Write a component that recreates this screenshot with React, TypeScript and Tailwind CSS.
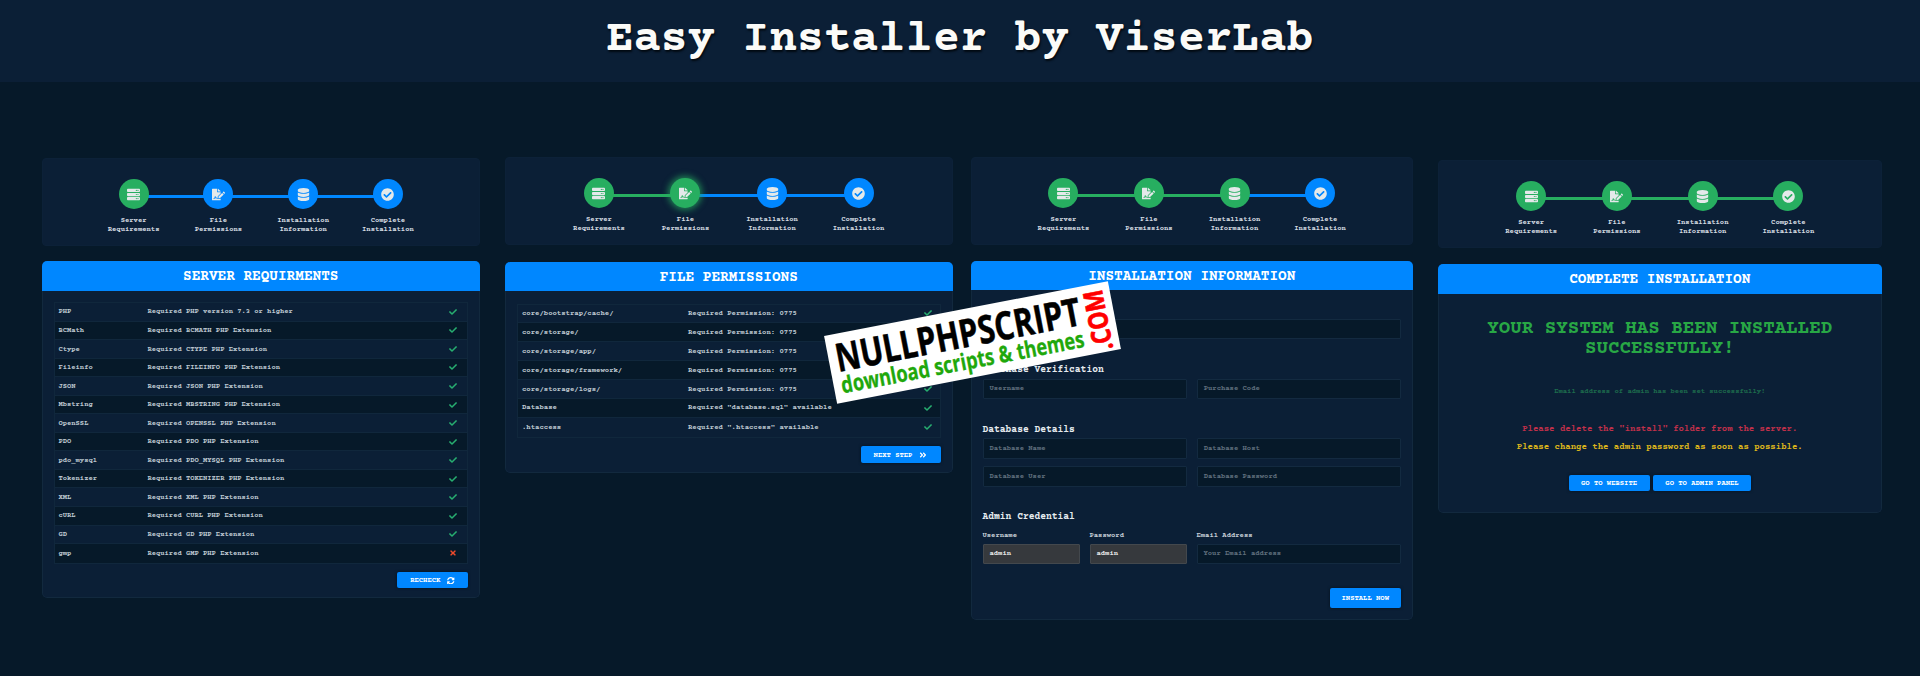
import type { ReactNode } from "react";
import { FaServer, FaFileSignature, FaDatabase, FaCheckCircle, FaCheck, FaTimes, FaSyncAlt, FaAngleDoubleRight } from "react-icons/fa";

const steps = [
  { icon: FaServer, a: "Server", b: "Requirements" },
  { icon: FaFileSignature, a: "File", b: "Permissions" },
  { icon: FaDatabase, a: "Installation", b: "Information" },
  { icon: FaCheckCircle, a: "Complete", b: "Installation" },
];

function Stepper({ done, glow }: { done: number; glow?: number }) {
  return (
    <div className="flex h-[87.5px] justify-center rounded-[4px] border border-[#0c2138] bg-[#0b1f36] pt-[20px]">
      {steps.map(({ icon: Icon, a, b }, i) => (
        <div key={b} className="relative flex w-[19.42%] shrink-0 flex-col items-center">
          {i < 3 && (
            <div
              className={`absolute left-1/2 top-[15.5px] h-[3px] w-full ${i < done - 1 ? "bg-[#27ae60]" : "bg-[#0087ff]"}`}
            />
          )}
          <div
            className={`relative flex size-[30px] items-center justify-center rounded-full text-[13px] text-[#e4e9ea] ${
              i < done ? "bg-[#27ae60]" : "bg-[#0087ff]"
            } ${i === glow ? "shadow-[0_0_6px_2px_#27ae60b0]" : ""}`}
          >
            <Icon />
          </div>
          <div className="mt-[7px] whitespace-nowrap text-center text-[7.2px] leading-[9.3px] text-[#d3dae0]">
            {a}
            <br />
            {b}
          </div>
        </div>
      ))}
    </div>
  );
}

function Card({ title, className, children }: { title: string; className: string; children: ReactNode }) {
  return (
    <div className={`flex flex-col overflow-hidden rounded-[5px] bg-[#0b1f36] ${className}`}>
      <div className="flex h-[29.5px] shrink-0 items-center justify-center bg-[#0087ff] pt-[4.5px] text-[14.4px] text-white">
        {title}
      </div>
      <div className="flex-1 rounded-b-[5px] border border-t-0 border-[#12293e] px-[11px]">{children}</div>
    </div>
  );
}

function Button({ className, children }: { className: string; children: ReactNode }) {
  return (
    <button
      className={`flex items-center justify-center rounded-[2px] bg-[#0087ff] pt-[1px] text-[7.2px] font-bold text-white shadow-[0_0_3px_#04101c] ${className}`}
    >
      {children}
    </button>
  );
}

function Table({ rows, cols, fails }: { rows: string[][]; cols: string; fails?: string }) {
  return (
    <div className="border border-[#10273c] text-[#bcc6cf]">
      {rows.map(([name, text]) => (
        <div
          key={name}
          className={`grid items-center whitespace-nowrap pl-[4px] even:bg-[#061929] ${cols} border-b border-[#10273c] last:border-b-0`}
        >
          <span>{name}</span>
          <span>{text}</span>
          {name === fails ? <FaTimes className="text-[8px] text-[#ee4a2b]" /> : <FaCheck className="text-[8px] text-[#27ae70]" />}
        </div>
      ))}
    </div>
  );
}

const extensions = [
  ["PHP", "Required PHP version 7.3 or higher"],
  ["BCMath", "Required BCMATH PHP Extension"],
  ["Ctype", "Required CTYPE PHP Extension"],
  ["Fileinfo", "Required FILEINFO PHP Extension"],
  ["JSON", "Required JSON PHP Extension"],
  ["Mbstring", "Required MBSTRING PHP Extension"],
  ["OpenSSL", "Required OPENSSL PHP Extension"],
  ["PDO", "Required PDO PHP Extension"],
  ["pdo_mysql", "Required PDO_MYSQL PHP Extension"],
  ["Tokenizer", "Required TOKENIZER PHP Extension"],
  ["XML", "Required XML PHP Extension"],
  ["cURL", "Required CURL PHP Extension"],
  ["GD", "Required GD PHP Extension"],
  ["gmp", "Required GMP PHP Extension"],
];

const permissions = [
  ["core/bootstrap/cache/", "Required Permission: 0775"],
  ["core/storage/", "Required Permission: 0775"],
  ["core/storage/app/", "Required Permission: 0775"],
  ["core/storage/framework/", "Required Permission: 0775"],
  ["core/storage/logs/", "Required Permission: 0775"],
  ["Database", 'Required "database.sql" available'],
  [".htaccess", 'Required ".htaccess" available'],
];

function Field({ label, disabled, text }: { label?: string; disabled?: boolean; text?: string }) {
  return (
    <div className="text-[7.2px]">
      {label && <div className="h-[13px] leading-[9px] text-[#c3ccd4]">{label}</div>}
      <div
        className={`flex h-[20.5px] items-center rounded-[1px] border pl-[6px] ${
          disabled ? "border-[#43484d] bg-[#36393d] text-[#e5e5e5]" : "border-[#132a40] bg-[#061929] text-[#5f6e7c]"
        }`}
      >
        {text}
      </div>
    </div>
  );
}

function Heading({ className, children }: { className: string; children?: ReactNode }) {
  return <h3 className={`text-[9.65px] leading-[12px] text-[#e6ebef] ${className}`}>{children}</h3>;
}

function Stamp() {
  return (
    <div className="absolute left-[828px] top-[308px] -rotate-[10.9deg]">
      <svg width="289" height="69" viewBox="0 0 289 69" className="block overflow-visible" fontFamily="'Open Sans', sans-serif">
        <rect width="289" height="69" fill="#fff" />
        <text x="7" y="38" fontSize="39" fontWeight="700" fill="#000" stroke="#000" strokeWidth="0.5" textLength="249" lengthAdjust="spacingAndGlyphs">
          NULLPHPSCRIPT
        </text>
        <text x="7.5" y="60" fontSize="23" fontWeight="700" fill="#1fa80c" stroke="#1fa80c" strokeWidth="0.3" textLength="247" lengthAdjust="spacingAndGlyphs">
          download scripts &amp; themes
        </text>
        <text
          transform="translate(281.5 67) rotate(-90)"
          fontSize="27"
          fontWeight="700"
          fill="#f00"
          stroke="#f00"
          strokeWidth="0.7"
          textLength="61"
          lengthAdjust="spacingAndGlyphs"
        >
          .COM
        </text>
      </svg>
    </div>
  );
}

export default function App() {
  return (
    <div className="relative h-[676px] w-[1920px] overflow-hidden bg-[#061929] font-['Courier_Prime','Courier_10_Pitch','Liberation_Mono',monospace] font-bold">
      <header className="flex h-[82px] items-start justify-center bg-[#0b1f36] pt-[15px]">
        <h1 className="text-[45.4px] leading-[52px] text-[#fbfbf8] [text-shadow:1px_2px_2px_#020a12]">Easy Installer by ViserLab</h1>
      </header>

      <main className="flex items-start pl-[41.5px]">
        <section className="mt-[76px] w-[438.5px]">
          <Stepper done={1} />
          <Card title="SERVER REQUIRMENTS" className="mt-[15.5px] h-[337px]">
            <div className="pt-[11.5px] text-[7.13px]">
              <Table rows={extensions} cols="h-[18.56px] grid-cols-[89px_301px_auto]" fails="gmp" />
            </div>
            <Button className="ml-auto mt-[8px] h-[16.5px] w-[71px] gap-[7px]">
              RECHECK <FaSyncAlt className="text-[7.5px]" />
            </Button>
          </Card>
        </section>

        <section className="ml-[25px] mt-[75px] w-[447.5px]">
          <Stepper done={2} glow={1} />
          <Card title="FILE PERMISSIONS" className="mt-[17px] h-[211px]">
            <div className="pt-[12.5px] text-[7.27px]">
              <Table rows={permissions} cols="h-[18.9px] grid-cols-[166px_235.5px_auto]" />
            </div>
            <Button className="ml-auto mt-[8.5px] h-[16.5px] w-[80px] gap-[7px]">
              NEXT STEP <FaAngleDoubleRight className="text-[8px]" />
            </Button>
          </Card>
        </section>

        <section className="ml-[18px] mt-[75px] w-[442.5px]">
          <Stepper done={3} />
          <Card title="INSTALLATION INFORMATION" className="mt-[16px] h-[359.5px]">
            <div className="pt-[28.5px]">
              <Field />
            </div>
            <Heading className="mt-[25px]">Purchase Verification</Heading>
            <div className="mt-[2.5px] grid grid-cols-2 gap-x-[10px]">
              <Field text="Username" />
              <Field text="Purchase Code" />
            </div>
            <Heading className="mt-[24.5px]">Database Details</Heading>
            <div className="mt-[2.5px] grid grid-cols-2 gap-x-[10px] gap-y-[7.5px]">
              <Field text="Database Name" />
              <Field text="Database Host" />
              <Field text="Database User" />
              <Field text="Database Password" />
            </div>
            <Heading className="mt-[24.5px]">Admin Credential</Heading>
            <div className="mt-[7.5px] grid grid-cols-[1fr_1fr_204.5px] gap-x-[10px]">
              <Field label="Username" text="admin" disabled />
              <Field label="Password" text="admin" disabled />
              <Field label="Email Address" text="Your Email address" />
            </div>
            <Button className="ml-auto mt-[23.5px] h-[20px] w-[71.5px]">INSTALL NOW</Button>
          </Card>
        </section>

        <section className="ml-[25px] mt-[78px] w-[443.5px]">
          <Stepper done={4} />
          <Card title="COMPLETE INSTALLATION" className="mt-[16.5px] h-[249px]">
            <div className="flex flex-col items-center whitespace-nowrap text-center">
              <p className="mt-[25px] text-[19.2px] leading-[20px] text-[#28a745]">
                YOUR SYSTEM HAS BEEN INSTALLED
                <br />
                SUCCESSFULLY!
              </p>
              <p className="mt-[26px] text-[7.2px] leading-[12px] text-[#1d6a4c]">Email address of admin has been set successfully!</p>
              <p className="mt-[26px] text-[9px] leading-[12px] text-[#c0304a]">Please delete the "install" folder from the server.</p>
              <p className="mt-[6px] text-[9px] leading-[12px] text-[#dcb51c]">Please change the admin password as soon as possible.</p>
              <div className="mt-[22px] flex gap-[3.5px]">
                <Button className="h-[16.5px] w-[81px]">GO TO WEBSITE</Button>
                <Button className="h-[16.5px] w-[98px]">GO TO ADMIN PANEL</Button>
              </div>
            </div>
          </Card>
        </section>
      </main>

      <Stamp />
    </div>
  );
}
